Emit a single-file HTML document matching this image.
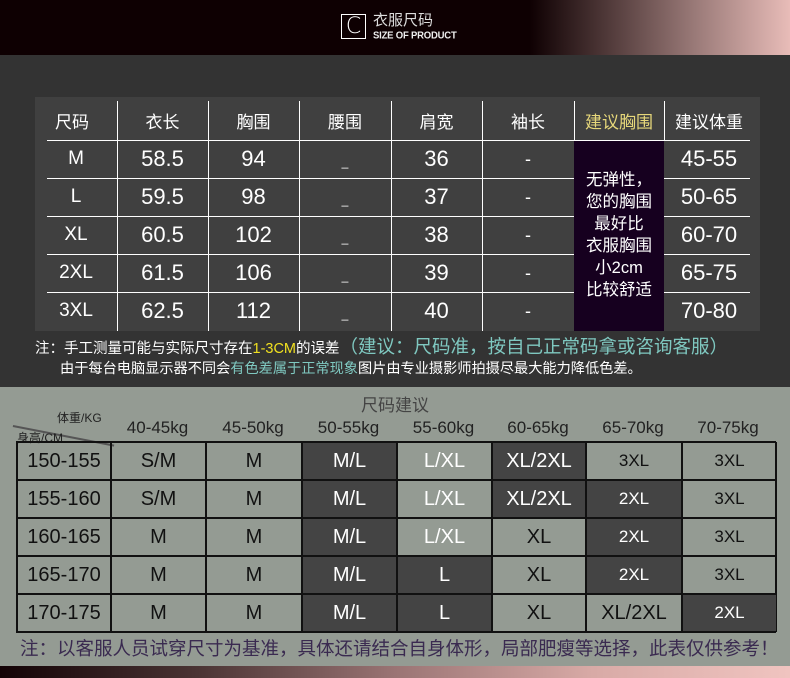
<!DOCTYPE html>
<html><head><meta charset="utf-8"><style>
*{margin:0;padding:0;box-sizing:border-box}
body{width:790px;height:678px;overflow:hidden;background:#333;font-family:"Liberation Sans","Noto Sans CJK SC",sans-serif;position:relative}
.a{position:absolute}
.hdr{left:0;top:0;width:790px;height:55px;background:linear-gradient(90deg,#0e0002 0%,#0e0002 67%,#4a3434 76%,#9a7a78 88%,#e8bcb8 100%)}
.c{display:flex;align-items:center;justify-content:center;text-align:center}
.tb{left:35px;top:97px;width:725px;height:234px;background:#404040}
.vl{width:1px;background:#fff}
.hl{height:1px;background:#fff}
.th{color:#fff;font-size:17px}
.td{color:#fff;font-size:22px}
.sec{left:0;top:387px;width:790px;height:279px;background:#949b93}
.bar{left:0;top:666px;width:790px;height:12px;background:linear-gradient(90deg,#140306 0%,#4a3434 25%,#9a7474 50%,#d8aaa6 75%,#f0c4c0 100%)}
.bc{border:1px solid #111;font-size:20px;color:#111}
.dk{background:#444;color:#fff}
.wt{color:#fff}
</style></head><body>
<div class="a hdr"></div>
<div class="a" style="left:341px;top:14px;width:25px;height:25px;border:1px solid #fff;color:#fff;font-size:22px;line-height:23px;text-align:center;font-family:'DejaVu Sans',sans-serif;font-weight:200">C</div>
<div class="a" style="left:373px;top:12px;color:#ddd;font-size:15px;line-height:17px">衣服尺码</div>
<div class="a" style="left:373px;top:30px;color:#eee;font-size:9.5px;font-weight:bold;letter-spacing:-0.2px;transform:scaleY(1.1)">SIZE OF PRODUCT</div>

<div class="a tb"></div>
<div class="a" style="left:574px;top:140px;width:90px;height:191px;background:#16001f"></div>
<div class="a vl" style="left:117px;top:101px;height:230px"></div>
<div class="a vl" style="left:208px;top:101px;height:230px"></div>
<div class="a vl" style="left:299px;top:101px;height:230px"></div>
<div class="a vl" style="left:391px;top:101px;height:230px"></div>
<div class="a vl" style="left:482px;top:101px;height:230px"></div>
<div class="a vl" style="left:574px;top:101px;height:39px"></div>
<div class="a vl" style="left:664px;top:101px;height:39px"></div>
<div class="a hl" style="left:47px;top:140px;width:703px"></div>
<div class="a hl" style="left:47px;top:178px;width:527px"></div><div class="a hl" style="left:664px;top:178px;width:86px"></div>
<div class="a hl" style="left:47px;top:216px;width:527px"></div><div class="a hl" style="left:664px;top:216px;width:86px"></div>
<div class="a hl" style="left:47px;top:254px;width:527px"></div><div class="a hl" style="left:664px;top:254px;width:86px"></div>
<div class="a hl" style="left:47px;top:292px;width:527px"></div><div class="a hl" style="left:664px;top:292px;width:86px"></div>

<div class="a c th" style="left:35px;top:101px;width:82px;height:39px;justify-content:flex-start;padding-left:20px">尺码</div>
<div class="a c th" style="left:117px;top:101px;width:91px;height:39px">衣长</div>
<div class="a c th" style="left:208px;top:101px;width:91px;height:39px">胸围</div>
<div class="a c th" style="left:299px;top:101px;width:92px;height:39px">腰围</div>
<div class="a c th" style="left:391px;top:101px;width:91px;height:39px">肩宽</div>
<div class="a c th" style="left:482px;top:101px;width:92px;height:39px">袖长</div>
<div class="a c th" style="left:574px;top:101px;width:90px;height:39px;color:#e6d77a">建议胸围</div>
<div class="a c th" style="left:664px;top:101px;width:90px;height:39px">建议体重</div>

<div class="a" style="left:35px;top:140px;width:82px">
<div class="c th" style="height:38px;font-size:19px">M</div><div class="c th" style="height:38px;font-size:19px">L</div><div class="c th" style="height:38px;font-size:19px">XL</div><div class="c th" style="height:38px;font-size:19px">2XL</div><div class="c th" style="height:38px;font-size:19px">3XL</div></div>
<div class="a" style="left:117px;top:140px;width:91px">
<div class="c td" style="height:38px">58.5</div><div class="c td" style="height:38px">59.5</div><div class="c td" style="height:38px">60.5</div><div class="c td" style="height:38px">61.5</div><div class="c td" style="height:38px">62.5</div></div>
<div class="a" style="left:208px;top:140px;width:91px">
<div class="c td" style="height:38px">94</div><div class="c td" style="height:38px">98</div><div class="c td" style="height:38px">102</div><div class="c td" style="height:38px">106</div><div class="c td" style="height:38px">112</div></div>
<div class="a" style="left:299px;top:140px;width:92px">
<div class="c td" style="height:38px;font-size:12px;padding-top:6px">_</div><div class="c td" style="height:38px;font-size:12px;padding-top:6px">_</div><div class="c td" style="height:38px;font-size:12px;padding-top:6px">_</div><div class="c td" style="height:38px;font-size:12px;padding-top:6px">_</div><div class="c td" style="height:38px;font-size:12px;padding-top:6px">_</div></div>
<div class="a" style="left:391px;top:140px;width:91px">
<div class="c td" style="height:38px">36</div><div class="c td" style="height:38px">37</div><div class="c td" style="height:38px">38</div><div class="c td" style="height:38px">39</div><div class="c td" style="height:38px">40</div></div>
<div class="a" style="left:482px;top:140px;width:92px">
<div class="c td" style="height:38px;font-size:18px">-</div><div class="c td" style="height:38px;font-size:18px">-</div><div class="c td" style="height:38px;font-size:18px">-</div><div class="c td" style="height:38px;font-size:18px">-</div><div class="c td" style="height:38px;font-size:18px">-</div></div>
<div class="a" style="left:664px;top:140px;width:90px">
<div class="c td" style="height:38px">45-55</div><div class="c td" style="height:38px">50-65</div><div class="c td" style="height:38px">60-70</div><div class="c td" style="height:38px">65-75</div><div class="c td" style="height:38px">70-80</div></div>
<div class="a c" style="left:574px;top:160px;width:90px;height:150px;color:#fff;font-size:16.5px;line-height:22px">无弹性，<br>您的胸围<br>最好比<br>衣服胸围<br>小2cm<br>比较舒适</div>

<div class="a" style="left:35px;top:336px;color:#fff;font-size:14.5px;white-space:nowrap;line-height:22px">注：手工测量可能与实际尺寸存在<span style="color:#f0e020">1-3CM</span>的误差<span style="color:#7fc8c0;font-size:18.5px">（建议：尺码准，按自己正常码拿或咨询客服）</span></div>
<div class="a" style="left:60px;top:358px;color:#fff;font-size:14.2px;white-space:nowrap">由于每台电脑显示器不同会<span style="color:#7fc8c0">有色差属于正常现象</span>图片由专业摄影师拍摄尽最大能力降低色差。</div>

<div class="a sec"></div>
<div class="a" style="left:0;top:391px;width:790px;text-align:center;color:#444;font-size:17px">尺码建议</div>
<div class="a" style="left:13px;top:425px;width:103px;height:1.5px;background:#555;transform:rotate(11deg);transform-origin:left"></div>
<div class="a" style="left:57px;top:409px;color:#222;font-size:12px">体重/KG</div>
<div class="a" style="left:17px;top:429px;color:#222;font-size:12px">身高/CM</div>
<div class="a" style="left:110px;top:418px;width:665px;display:flex;color:#222;font-size:17px">
<div class="c" style="width:95px">40-45kg</div><div class="c" style="width:96px">45-50kg</div><div class="c" style="width:95px">50-55kg</div><div class="c" style="width:95px">55-60kg</div><div class="c" style="width:94px">60-65kg</div><div class="c" style="width:96px">65-70kg</div><div class="c" style="width:94px">70-75kg</div></div>

<div class="a" style="left:16px;top:441px;width:760px;display:grid;grid-template-columns:94px 95px 96px 95px 95px 94px 96px 95px;grid-auto-rows:38px;border:1px solid #111">
<div class="c bc">150-155</div><div class="c bc">S/M</div><div class="c bc">M</div><div class="c bc dk">M/L</div><div class="c bc wt">L/XL</div><div class="c bc dk">XL/2XL</div><div class="c bc" style="font-size:17px">3XL</div><div class="c bc" style="font-size:17px">3XL</div>
<div class="c bc">155-160</div><div class="c bc">S/M</div><div class="c bc">M</div><div class="c bc dk">M/L</div><div class="c bc wt">L/XL</div><div class="c bc dk">XL/2XL</div><div class="c bc dk" style="font-size:17px">2XL</div><div class="c bc" style="font-size:17px">3XL</div>
<div class="c bc">160-165</div><div class="c bc">M</div><div class="c bc">M</div><div class="c bc dk">M/L</div><div class="c bc wt">L/XL</div><div class="c bc">XL</div><div class="c bc dk" style="font-size:17px">2XL</div><div class="c bc" style="font-size:17px">3XL</div>
<div class="c bc">165-170</div><div class="c bc">M</div><div class="c bc">M</div><div class="c bc dk">M/L</div><div class="c bc dk">L</div><div class="c bc">XL</div><div class="c bc dk" style="font-size:17px">2XL</div><div class="c bc" style="font-size:17px">3XL</div>
<div class="c bc">170-175</div><div class="c bc">M</div><div class="c bc">M</div><div class="c bc dk">M/L</div><div class="c bc dk">L</div><div class="c bc">XL</div><div class="c bc">XL/2XL</div><div class="c bc dk" style="font-size:17px">2XL</div>
</div>
<div class="a" style="left:20px;top:635px;color:#3a2a50;font-size:18.5px;white-space:nowrap">注：以客服人员试穿尺寸为基准，具体还请结合自身体形，局部肥瘦等选择，此表仅供参考！</div>
<div class="a bar"></div>
</body></html>
